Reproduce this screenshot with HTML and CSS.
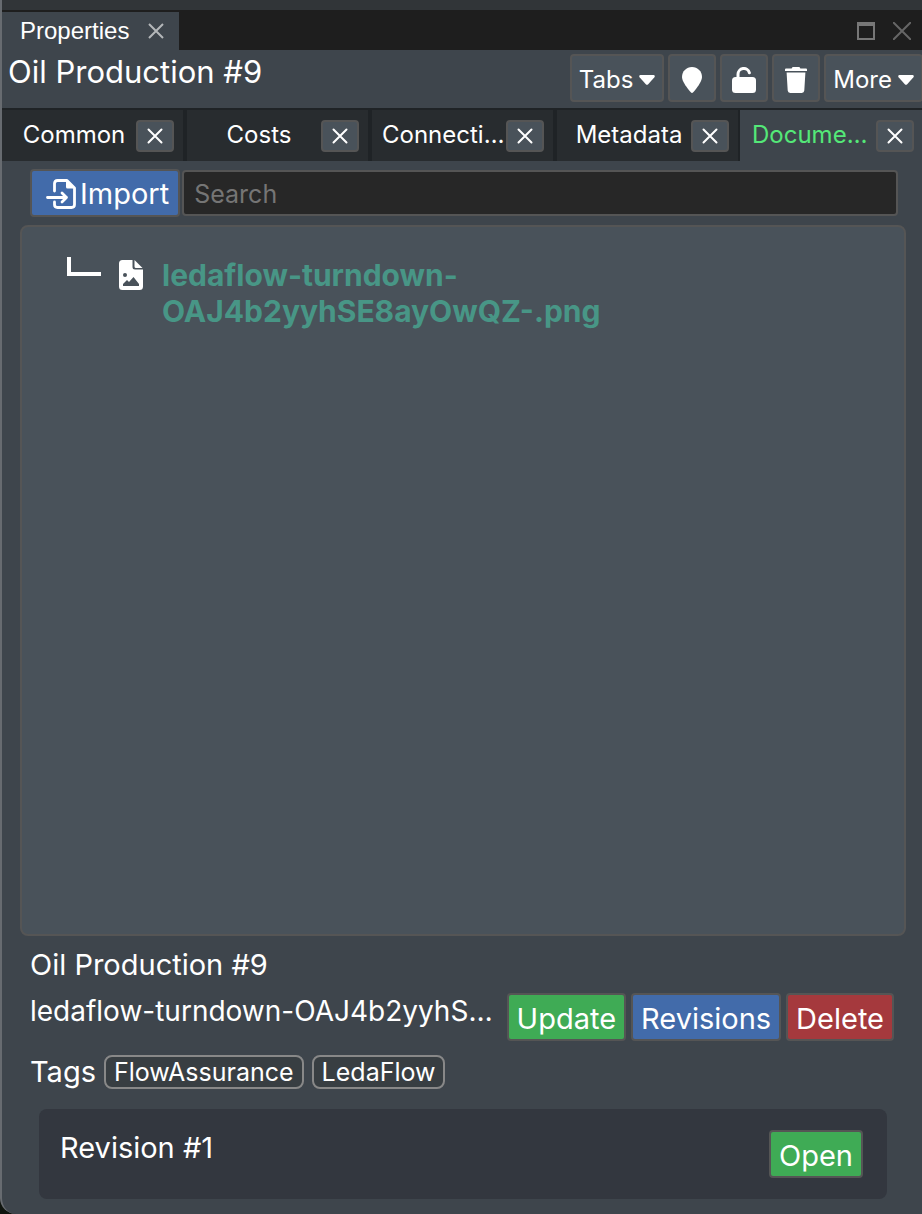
FILE: index.html
```html
<!DOCTYPE html>
<html lang="en">
<head>
    <meta charset="UTF-8">
    <meta name="viewport" content="width=device-width, initial-scale=1.0">
    <title>Properties</title>
    <link rel="stylesheet" href="styles.css">
</head>
<body>

    <div class="window">
        <!-- Dock tab bar -->
        <header class="dock-bar">
            <div class="dock-tab">
                <span>Properties</span>
                <button class="plain-btn" aria-label="Close Properties">
                    <svg width="16" height="16" viewBox="0 0 16 16"><path d="M1 1L15 15M15 1L1 15" stroke="#b4b7b9" stroke-width="2"/></svg>
                </button>
            </div>
            <div class="dock-controls">
                <button class="plain-btn" aria-label="Maximize">
                    <svg width="18" height="18" viewBox="0 0 18 18"><path d="M1 1H17V17H1Z" fill="none" stroke="#777" stroke-width="2"/><path d="M0 0H18V4H0Z" fill="#777"/></svg>
                </button>
                <button class="plain-btn" aria-label="Close panel">
                    <svg width="18" height="18" viewBox="0 0 18 18"><path d="M0 0L18 18M18 0L0 18" stroke="#666" stroke-width="2"/></svg>
                </button>
            </div>
        </header>

        <div class="toolbar">
            <h1>Oil Production #9</h1>
            <div class="tools">
                <button class="tool">Tabs
                    <svg width="16" height="10" viewBox="0 0 16 10"><path d="M1.3 0H14.7Q16.6 .6 15.4 2.2L9.2 9.2Q8 10.4 6.8 9.2L.6 2.2Q-.6 .6 1.3 0Z" fill="#fff"/></svg>
                </button>
                <button class="tool" aria-label="Locate">
                    <svg width="20" height="26" viewBox="0 0 20 26"><path d="M10 0C4.400 0 0 4.400 0 9.900C0 14.500 6 22 8.800 25.300Q10 26.500 11.200 25.300C14 22 20 14.500 20 9.900C20 4.400 15.600 0 10 0Z" fill="#fff"/></svg>
                </button>
                <button class="tool" aria-label="Unlock">
                    <svg width="24" height="26" viewBox="0 0 24 26"><path d="M6 11V7.500A5.800 5.800 0 0 1 17.400 5.800" fill="none" stroke="#fff" stroke-width="3" stroke-linecap="round"/><rect y="10" width="24" height="16" rx="3.500" fill="#fff"/></svg>
                </button>
                <button class="tool" aria-label="Delete item">
                    <svg width="22" height="26" viewBox="0 0 22 26"><path d="M7.600 0H14.400L15.400 1.600H21Q22 1.600 22 2.600V4H0V2.600Q0 1.600 1 1.600H6.600ZM1.600 5.600H20.400L19.300 23.600Q19.100 26 16.800 26H5.200Q2.900 26 2.700 23.600Z" fill="#fff"/></svg>
                </button>
                <button class="tool">More
                    <svg width="16" height="10" viewBox="0 0 16 10"><path d="M1.3 0H14.7Q16.6 .6 15.4 2.2L9.2 9.2Q8 10.4 6.8 9.2L.6 2.2Q-.6 .6 1.3 0Z" fill="#fff"/></svg>
                </button>
            </div>
        </div>

        <!-- Property tabs -->
        <nav class="tabs">
            <div class="tab">
                <a href="#common">Common</a>
                <button class="tab-close" aria-label="Close Common"><svg width="16" height="16" viewBox="0 0 16 16"><path d="M1.500 1.500L14.500 14.500M14.500 1.500L1.500 14.500"/></svg></button>
            </div>
            <div class="tab">
                <a href="#costs">Costs</a>
                <button class="tab-close" aria-label="Close Costs"><svg width="16" height="16" viewBox="0 0 16 16"><path d="M1.500 1.500L14.500 14.500M14.500 1.500L1.500 14.500"/></svg></button>
            </div>
            <div class="tab">
                <a href="#connections">Connections</a>
                <button class="tab-close" aria-label="Close Connections"><svg width="16" height="16" viewBox="0 0 16 16"><path d="M1.500 1.500L14.500 14.500M14.500 1.500L1.500 14.500"/></svg></button>
            </div>
            <div class="tab">
                <a href="#metadata">Metadata</a>
                <button class="tab-close" aria-label="Close Metadata"><svg width="16" height="16" viewBox="0 0 16 16"><path d="M1.500 1.500L14.500 14.500M14.500 1.500L1.500 14.500"/></svg></button>
            </div>
            <div class="tab active">
                <a href="#documents">Documents</a>
                <button class="tab-close" aria-label="Close Documents"><svg width="16" height="16" viewBox="0 0 16 16"><path d="M1.500 1.500L14.500 14.500M14.500 1.500L1.500 14.500"/></svg></button>
            </div>
        </nav>

        <main class="documents">
            <div class="search-row">
                <button class="btn blue import">
                    <svg width="30" height="30" viewBox="0 0 30 30"><path d="M8.500 12V4.500Q8.500 1.500 11.500 1.500H21L28.500 9V25.500Q28.500 28.500 25.500 28.500H11.500Q8.500 28.500 8.500 25.500V23M1.500 18.500H20.500M16 14L20.500 18.500L16 23" fill="none" stroke="#fff" stroke-width="2.800" stroke-linecap="round" stroke-linejoin="round"/><path d="M20 1V8Q20 9.500 21.500 9.500H29Z" fill="#fff"/></svg>
                    <span>Import</span>
                </button>
                <input class="search" type="text" placeholder="Search" aria-label="Search">
            </div>

            <div class="tree">
                <div class="tree-item">
                    <span class="branch"></span>
                    <svg class="file-icon" width="24" height="30" viewBox="0 0 24 30"><path d="M3.500 0H13.500V7Q13.500 9.500 16 9.500H24V26.500Q24 30 20.500 30H3.500Q0 30 0 26.500V3.500Q0 0 3.500 0ZM15.500 0L23.500 8H17Q15.500 8 15.500 6.500Z" fill="#fff"/><circle cx="6" cy="15" r="2" fill="#49525a"/><path d="M4 26V24L8 20L10 22L14.500 17L20 24V26Z" fill="#49525a"/></svg>
                    <a class="file-name" href="#file">ledaflow-turndown-OAJ4b2yyhSE8ayOwQZ-.png</a>
                </div>
            </div>

            <section class="details">
                <h2>Oil Production #9</h2>
                <div class="file-row">
                    <span class="file-title">ledaflow-turndown-OAJ4b2yyhSE8ayOwQZ-.png</span>
                    <button class="btn green">Update</button>
                    <button class="btn blue">Revisions</button>
                    <button class="btn red">Delete</button>
                </div>
                <div class="tag-row">
                    <span>Tags</span>
                    <span class="tag">FlowAssurance</span>
                    <span class="tag">LedaFlow</span>
                </div>
                <div class="revision">
                    <span>Revision #1</span>
                    <button class="btn green">Open</button>
                </div>
            </section>
        </main>
    </div>

</body>
</html>
```
FILE: styles.css
```css
* {
    box-sizing: border-box;
}

body {
    margin: 0;
    background: #10150f;
    color: #fff;
    font-family: Inter, sans-serif;
    font-size: 29px;
    line-height: 36px;
}

button, input {
    font: inherit;
    color: inherit;
}

button {
    cursor: pointer;
}

a {
    color: inherit;
    text-decoration: none;
}

h1, h2 {
    margin: 0;
    font-weight: 400;
}

svg {
    display: block;
    flex: none;
}

.window {
    display: flex;
    flex-direction: column;
    min-height: 100vh;
    background: #3e454c;
    border-left: 2px solid #676b70;
    border-bottom-left-radius: 16px;
    overflow: hidden;
}

.dock-bar {
    display: flex;
    justify-content: space-between;
    height: 50px;
    padding-top: 2px;
    background: #1e1e1e;
    border-top: 10px solid #313538;
}

.dock-tab {
    display: flex;
    align-items: center;
    gap: 19px;
    padding: 0 15px 0 18px;
    background: #3e454c;
    font-family: "Liberation Sans", Arial, sans-serif;
    font-size: 24px;
}

.plain-btn {
    padding: 0;
    background: none;
    border: none;
}

.dock-controls {
    display: flex;
    align-items: center;
    gap: 18px;
    padding-right: 11px;
}

.toolbar {
    display: flex;
    justify-content: space-between;
    height: 58px;
    padding: 4px 0 0 6px;
}

.toolbar h1 {
    font-size: 31px;
}

.tools {
    display: flex;
    gap: 4px;
    margin-right: -1px;
}

.tool {
    display: flex;
    align-items: center;
    justify-content: center;
    gap: 6px;
    min-width: 48px;
    height: 48px;
    padding: 4px 7px 0 7px;
    background: #49525a;
    border: 2px solid #555;
    border-radius: 4px;
    font-size: 24px;
}

.tabs {
    display: flex;
    height: 53px;
    margin: 0 -3px 0 -2px;
    border-top: 2px solid #1f2326;
}

.tab {
    display: flex;
    flex: 1;
    min-width: 0;
    padding: 10px 9px 0 10px;
    background: #282c2f;
    border: solid #1f2326;
    border-width: 0 2px;
}

.tab a {
    flex: 1;
    min-width: 0;
    overflow: hidden;
    text-align: center;
    text-overflow: ellipsis;
    white-space: nowrap;
    font-size: 24px;
    line-height: 30px;
}

.tab.active {
    background: #3e454c;
    border-color: #3e454c;
    color: #54e878;
}

.tab-close {
    display: flex;
    align-items: center;
    justify-content: center;
    width: 38px;
    height: 32px;
    padding: 0;
    background: #49525a;
    border: 2px solid #555;
    border-radius: 4px;
}

.tab-close path {
    stroke: #fff;
    stroke-width: 2;
    stroke-linecap: round;
}

.documents {
    display: flex;
    flex: 1;
    flex-direction: column;
    padding: 8px 16px 15px 18px;
}

.search-row {
    display: flex;
    gap: 2px;
    padding: 0 8px 0 10px;
}

.btn {
    height: 48px;
    padding: 4px 8px 0;
    border: 2px solid #555;
    border-radius: 4px;
    white-space: nowrap;
}

.blue {
    background: #426baa;
}

.green {
    background: #3fab55;
}

.red {
    background: #a5393d;
}

.import {
    display: flex;
    align-items: center;
    gap: 4px;
    padding: 2px 9px 0 14px;
}

.search {
    flex: 1;
    min-width: 0;
    height: 46px;
    margin-top: 1px;
    padding: 2px 10px 0;
    background: #272727;
    border: 2px solid #555;
    border-radius: 4px;
    font-size: 25px;
}

.search::placeholder {
    color: #757575;
}

.tree {
    flex: 1;
    margin-top: 8px;
    padding: 30px 45px;
    background: #49525a;
    border: 2px solid #555;
    border-radius: 8px;
}

.tree-item {
    display: flex;
}

.branch {
    width: 34px;
    height: 19px;
    border: solid #fff;
    border-width: 0 0 4px 4px;
}

.file-icon {
    margin: 3px 19px 0 18px;
}

.file-name {
    max-width: 460px;
    color: #489686;
    font-size: 30px;
    font-weight: 700;
}

.details {
    padding: 11px 10px 0;
}

.details h2 {
    font-size: 29px;
}

.file-row {
    display: flex;
    gap: 5px;
    margin-top: 10px;
    padding-right: 2px;
}

.file-title {
    flex: 1;
    min-width: 0;
    overflow: hidden;
    text-overflow: ellipsis;
    white-space: nowrap;
    font-size: 28px;
}

.tag-row {
    display: flex;
    align-items: center;
    gap: 8px;
    margin-top: 13px;
}

.tag {
    padding: 0 8px;
    background: #383e42;
    border: 2px solid #888;
    border-radius: 8px;
    font-size: 25px;
    line-height: 30px;
}

.revision {
    display: flex;
    justify-content: space-between;
    margin: 19px 9px 0;
    padding: 21px 24px 21px 21px;
    background: #33373f;
    border-radius: 8px;
}
```
